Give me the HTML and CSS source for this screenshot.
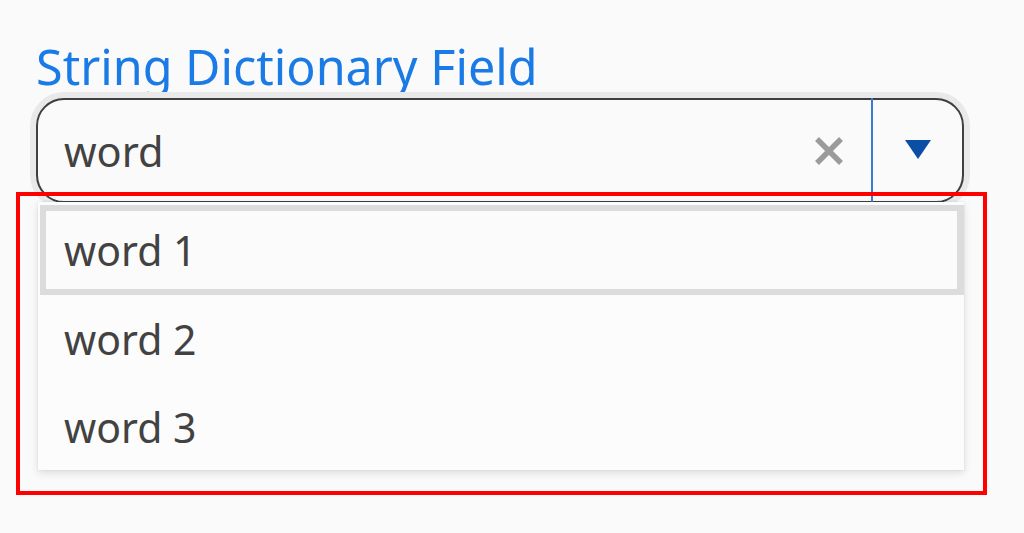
FILE: index.html
```html
<!DOCTYPE html>
<html lang="en">
<head>
<meta charset="utf-8">
<title>String Dictionary Field</title>
<link rel="stylesheet" href="styles.css">
</head>
<body>
<div class="field">
  <div class="label">String Dictionary Field</div>
  <div class="combo">
    <div class="input">word</div>
    <div class="clear">
      <svg width="30" height="30" viewBox="0 0 30 30"><path d="M3 3 L27 27 M27 3 L3 27" stroke="#9b9b9b" stroke-width="5.5" stroke-linecap="butt" fill="none"/></svg>
    </div>
    <div class="sep"></div>
    <div class="toggle">
      <svg width="26" height="19" viewBox="0 0 26 19"><polygon points="0,0 26,0 13,19" fill="#0b4ea6"/></svg>
    </div>
    <div class="underline"></div>
  </div>
  <ul class="menu">
    <li class="item active">word 1</li>
    <li class="item">word 2</li>
    <li class="item">word 3</li>
  </ul>
</div>
<div class="highlight"></div>
</body>
</html>
```

FILE: styles.css
```css
html, body {
  margin: 0;
  padding: 0;
  background: #fafafa;
}
body {
  font-family: "Noto Sans", "Open Sans", sans-serif;
  color: #424242;
  width: 1024px;
  height: 533px;
  overflow: hidden;
  position: relative;
}
.field {
  padding: 36px 0 0 36px;
  width: 928px;
}
.label {
  font-size: 48.5px;
  line-height: 62px;
  color: #1b7be6;
  height: 62px;
  margin-left: 0;
  margin-top: -1px;
  margin-bottom: 1px;
}
.combo {
  position: relative;
  display: flex;
  align-items: stretch;
  height: 105px;
  box-sizing: border-box;
  border: 2px solid #3f3f3f;
  border-radius: 28px;
  background: #fafafa;
  box-shadow: 0 0 0 6px #e9e9e9;
}
.input {
  flex: 1;
  display: flex;
  align-items: center;
  padding-left: 26px;
  font-size: 41.5px;
}
.clear {
  display: flex;
  align-items: center;
  justify-content: center;
  width: 70px;
  padding-right: 7px;
}
.sep {
  width: 2px;
  background: #3b7ad2;
  margin: -2px 0;
}
.toggle {
  width: 89px;
  display: flex;
  align-items: center;
  justify-content: center;
  padding-bottom: 2px;
}
.underline {
  position: absolute;
  left: 26px;
  bottom: -3px;
  width: 334px;
  height: 2px;
  background: #7f9dc4;
  z-index: -1;
}
.menu {
  list-style: none;
  margin: -1px 0 0 2px;
  padding: 3px 0 0 0;
  width: 926px;
  height: 268px;
  box-sizing: border-box;
  background: #fcfcfc;
  box-shadow: 0 3px 8px rgba(0, 0, 0, 0.12), 0 0 2px rgba(0, 0, 0, 0.08);
  position: relative;
}
.item {
  height: 88px;
  display: flex;
  align-items: center;
  padding-left: 26px;
  font-size: 41px;
  box-sizing: border-box;
}
.item.active {
  height: 90px;
  margin-left: 2px;
  border: 6px solid #dcdcdc;
  border-right-width: 7px;
  padding-left: 18px;
  background: #fbfbfb;
}
.highlight {
  position: absolute;
  left: 16px;
  top: 192px;
  width: 971px;
  height: 303px;
  box-sizing: border-box;
  border: 4px solid #ff0000;
}
```
